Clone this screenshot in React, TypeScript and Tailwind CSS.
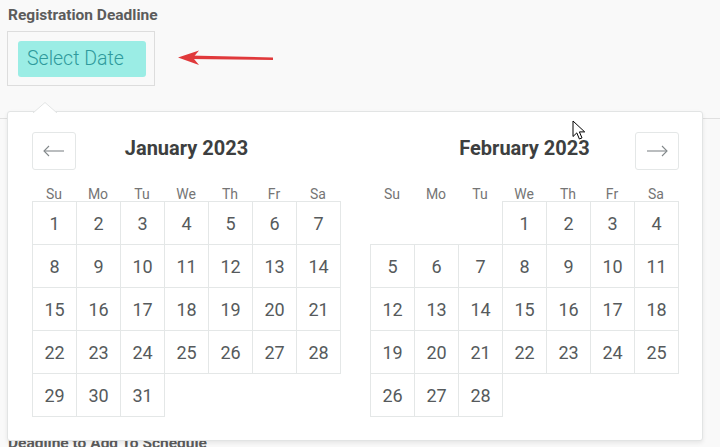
import React from "react";

const JAN: (number | null)[] = Array.from({ length: 31 }, (_, i) => i + 1);
const FEB: (number | null)[] = [null, null, null, ...Array.from({ length: 28 }, (_, i) => i + 1)];
const DAYS = ["Su", "Mo", "Tu", "We", "Th", "Fr", "Sa"];

function NavButton({ dir }: { dir: "prev" | "next" }) {
  return (
    <button className="w-[44px] h-[38px] border border-[#e4e7e7] rounded-[3px] bg-white flex items-center justify-center">
      <svg width="22" height="12" viewBox="0 0 22 12" fill="none" stroke="#82888a" strokeWidth="1.1">
        {dir === "prev" ? (
          <>
            <path d="M1 6h20" />
            <path d="M6 1L1 6l5 5" />
          </>
        ) : (
          <>
            <path d="M1 6h20" />
            <path d="M16 1l5 5-5 5" />
          </>
        )}
      </svg>
    </button>
  );
}

function Month({ title, days, side }: { title: string; days: (number | null)[]; side: "left" | "right" }) {
  return (
    <div className="w-[309px]">
      {/* Header */}
      <div className="grid grid-cols-[44px_1fr_44px] items-center h-[38px]">
        <div>{side === "left" && <NavButton dir="prev" />}</div>
        <div className="text-center text-[20px] font-bold text-[#3d3f40] leading-none pb-[6px]">{title}</div>
        <div>{side === "right" && <NavButton dir="next" />}</div>
      </div>

      {/* Weekday names */}
      <div className="grid grid-cols-[repeat(7,44px)] h-[31px] items-end">
        {DAYS.map((d) => (
          <div key={d} className="text-center text-[14px] leading-none text-[#757575]">
            {d}
          </div>
        ))}
      </div>

      {/* Days */}
      <div className="grid grid-cols-[repeat(7,44px)] auto-rows-[43px]">
        {days.map((d, i) =>
          d === null ? (
            <div key={i} />
          ) : (
            <div
              key={i}
              className="w-[45px] h-[44px] border border-[#e4e7e7] flex items-center justify-center text-[18px] text-[#565a5c] bg-white"
            >
              {d}
            </div>
          )
        )}
      </div>
    </div>
  );
}

export default function App() {
  return (
    <div className="min-h-screen bg-[#f9f9f9] pl-[7px] pt-[5px] overflow-hidden" style={{ fontFamily: "Roboto, 'Liberation Sans', sans-serif" }}>
      <div className="pl-px text-[15.5px] leading-[20px] font-bold text-[#5c5c5c]">Registration Deadline</div>

      <div className="relative mt-[6px] flex items-center">
        <div className="w-[148px] h-[55px] border border-[#dddddd] pl-[10px] pt-[9px]">
          <div className="w-[128px] h-[36px] rounded-[3px] bg-[#9bede5] pl-[9px] flex items-center text-[19.5px] font-light text-[#2f9a9c]">
            Select Date
          </div>
        </div>

        {/* red annotation arrow */}
        <svg width="100" height="20" viewBox="0 0 100 20" className="ml-[22px] mt-[-2px]">
          <path d="M12 7.5L96 9.5L96 12L12 11z" fill="#e0393b" />
          <path d="M1 9.5L22 2.5L16 9.8L22 17z" fill="#e0393b" />
        </svg>

        {/* Date picker popup */}
        <div className="absolute top-[80px] left-0 z-10 w-[696px] h-[330px] bg-white border border-[#e2e4e4] rounded-[3px] shadow-[0_2px_4px_rgba(0,0,0,0.08)] pl-[24px] pt-[20px]">
          <svg width="24" height="11" viewBox="0 0 24 11" className="absolute left-[25px] top-[-10px]">
            <path d="M0 11L12 0.5L24 11" fill="#ffffff" stroke="#e2e4e4" strokeWidth="1" />
          </svg>
          <div className="flex gap-[29px]">
            <Month title="January 2023" days={JAN} side="left" />
            <Month title="February 2023" days={FEB} side="right" />
          </div>
        </div>
      </div>

      <div className="mt-[32px] -ml-[7px] border-t border-[#e0e0e0]" />

      <div className="mt-[314px] pl-px text-[15.5px] leading-[20px] font-bold text-[#5c5c5c]">Deadline to Add To Schedule</div>

      {/* mouse pointer */}
      <svg width="14" height="21" viewBox="0 0 14 21" className="absolute left-[572px] top-[120px] z-20">
        <path d="M1 1v15.5l3.8-3.6 2.6 6.1 2.6-1.1-2.6-6h5.3z" fill="#ffffff" stroke="#000000" strokeWidth="1" strokeLinejoin="round" />
      </svg>
    </div>
  );
}
